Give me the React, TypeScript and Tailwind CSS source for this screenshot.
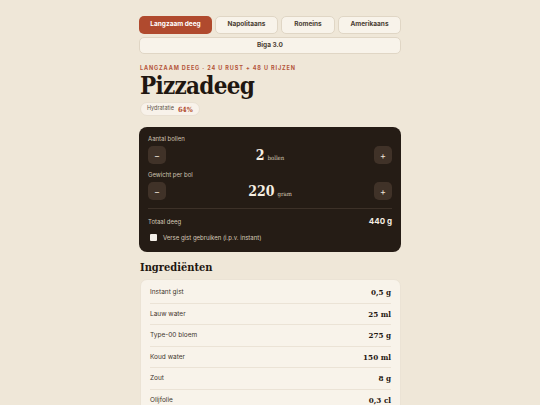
import React from "react";

const serif = { fontFamily: '"DejaVu Serif Condensed", "DejaVu Serif", serif' } as const;

const tabs = ["Langzaam deeg", "Napolitaans", "Romeins", "Amerikaans"];
const ingredients: [string, string][] = [
  ["Instant gist", "0,5 g"],
  ["Lauw water", "25 ml"],
  ["Type-00 bloem", "275 g"],
  ["Koud water", "150 ml"],
  ["Zout", "8 g"],
  ["Olijfolie", "0,3 cl"],
];

function Stepper({ label, value, unit }: { label: string; value: string; unit: string }) {
  return (
    <div>
      <div className="text-[6px] leading-[8px] text-[#cfc3b1] mb-[3px]">{label}</div>
      <div className="flex items-center justify-between">
        <button className="w-[18px] h-[18px] rounded-[5px] bg-[#403228] text-[#efe6d8] text-[9px] leading-none flex items-center justify-center">−</button>
        <div className="flex items-baseline gap-[3px] text-[#f6eee2]">
          <span style={serif} className="text-[14px] font-bold leading-none">{value}</span>
          <span style={serif} className="text-[6px] leading-none text-[#d8ccb8]">{unit}</span>
        </div>
        <button className="w-[18px] h-[18px] rounded-[5px] bg-[#403228] text-[#efe6d8] text-[9px] leading-none flex items-center justify-center">+</button>
      </div>
    </div>
  );
}

export default function App() {
  return (
    <div className="w-[540px] h-[405px] overflow-hidden bg-[#efe7d8]" style={{ fontFamily: 'Inter, "Liberation Sans", sans-serif' }}>
      <div className="w-[262px] ml-[139px] pt-[16px]">
        <div className="grid grid-cols-[73px_63px_54px_63px] gap-[3px]">
          {tabs.map((t, i) => (
            <div
              key={t}
              className={
                i === 0
                  ? "h-[18px] rounded-[5px] bg-[#b04a2e] text-white text-[6.5px] font-bold flex items-center justify-center"
                  : "h-[18px] rounded-[5px] bg-[#f8f3ea] border border-[#e0d6c5] text-[#4a3d32] text-[6.5px] font-bold flex items-center justify-center"
              }
            >
              {t}
            </div>
          ))}
        </div>
        <div className="mt-[3px] h-[17px] rounded-[5px] bg-[#f8f3ea] border border-[#e0d6c5] text-[#4a3d32] text-[6.5px] font-bold flex items-center justify-center">
          Biga 3.0
        </div>

        <div className="mt-[11px] ml-[1px] text-[5.5px] leading-[7px] font-bold tracking-[0.16em] text-[#b4553a]">
          LANGZAAM DEEG · 24 U RUST + 48 U RIJZEN
        </div>
        <h1 style={serif} className="ml-[1px] text-[24px] leading-[27px] font-bold text-[#1f1711] tracking-[-0.03em]">
          Pizzadeeg
        </h1>
        <div className="mt-[3px] ml-[1px] flex w-fit items-center gap-[4px] h-[14px] px-[6px] rounded-full bg-[#f8f2ea] border border-[#e9e0d2]">
          <span className="text-[5.5px] leading-none text-[#5d5146]">Hydratatie</span>
          <span style={serif} className="text-[7px] leading-none font-bold text-[#b04a2e]">64%</span>
        </div>

        <div className="mt-[11px] rounded-[8px] bg-[#251c15] px-[9px] pt-[8px] pb-[10px]">
          <Stepper label="Aantal bollen" value="2" unit="bollen" />
          <div className="h-[7px]" />
          <Stepper label="Gewicht per bol" value="220" unit="gram" />
          <div className="mt-[8px] border-t border-[#3d3128]" />
          <div className="mt-[6px] h-[12px] flex items-center justify-between">
            <span className="text-[6px] text-[#d6cab8]">Totaal deeg</span>
            <span className="text-[8px] font-bold text-[#f6eee2]">440 g</span>
          </div>
          <div className="mt-[5px] h-[10px] flex items-center gap-[6px] pl-[2px]">
            <span className="w-[7px] h-[7px] bg-[#f4efe8] rounded-[1px]" />
            <span className="text-[6px] text-[#d6cab8]">Verse gist gebruiken (i.p.v. instant)</span>
          </div>
        </div>

        <h2 style={serif} className="mt-[9px] ml-[1px] text-[11px] leading-[14px] font-bold text-[#1f1711]">
          Ingrediënten
        </h2>
        <div className="mt-[4px] ml-[1px] rounded-[7px] bg-[#f8f3ea] border border-[#ebe3d5] px-[9px] pt-[2px]">
          {ingredients.map(([n, v], i) => (
            <div
              key={n}
              className={
                i < ingredients.length - 1
                  ? "h-[21.5px] flex items-center justify-between border-b border-[#ebe3d6]"
                  : "h-[21.5px] flex items-center justify-between"
              }
            >
              <span className="text-[6.5px] leading-none text-[#3f352d]">{n}</span>
              <span style={serif} className="text-[8px] leading-none font-bold text-[#1f1711]">{v}</span>
            </div>
          ))}
        </div>
      </div>
    </div>
  );
}
